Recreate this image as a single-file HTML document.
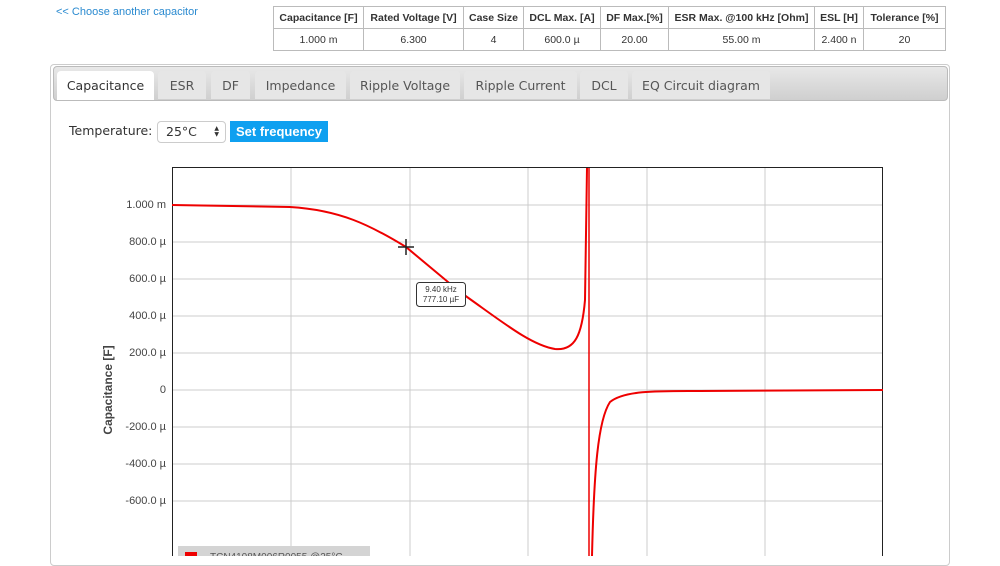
<!DOCTYPE html>
<html><head><style>
body{margin:0;width:1000px;height:556px;overflow:hidden;background:#fff;font-family:"Liberation Sans",sans-serif;position:relative}
.a{position:absolute}
table{border-collapse:collapse;position:absolute;left:273px;top:6px;font-size:10.5px;color:#333;table-layout:fixed;width:672px}
td{border:1px solid #bbb;text-align:center;height:21px;padding:0;white-space:nowrap;overflow:hidden}
tr:first-child td{font-weight:bold}
.tab{position:absolute;top:71px;height:28px;background:#e6e6e6;border-radius:4px 4px 0 0;font-size:12.5px;color:#555;text-align:center;line-height:29px;font-family:"DejaVu Sans",sans-serif}
.yl{position:absolute;right:834px;font-size:11px;color:#444}
</style></head><body>
<div class="a" style="left:56px;top:6px;font-size:11px;color:#2a8ad0">&lt;&lt; Choose another capacitor</div>
<table>
<colgroup><col style="width:90px"><col style="width:100px"><col style="width:60px"><col style="width:77px"><col style="width:68px"><col style="width:146px"><col style="width:49px"><col style="width:82px"></colgroup>
<tr><td>Capacitance [F]</td><td>Rated Voltage [V]</td><td>Case Size</td><td>DCL Max. [A]</td><td>DF Max.[%]</td><td>ESR Max. @100 kHz [Ohm]</td><td>ESL [H]</td><td>Tolerance [%]</td></tr>
<tr><td>1.000 m</td><td>6.300</td><td>4</td><td>600.0 µ</td><td>20.00</td><td>55.00 m</td><td>2.400 n</td><td>20</td></tr>
</table>
<div class="a" style="left:50px;top:64px;width:898px;height:500px;border:1px solid #ccc;border-radius:4px"></div>
<div class="a" style="left:53px;top:66px;width:893px;height:33px;background:linear-gradient(#e8e8e8,#cfcfcf);border:1px solid #bbb;border-radius:4px"></div>
<div class="tab" style="left:57px;width:97px;background:#fff;color:#333;height:29px">Capacitance</div>
<div class="tab" style="left:158px;width:48px">ESR</div>
<div class="tab" style="left:211px;width:39px">DF</div>
<div class="tab" style="left:255px;width:91px">Impedance</div>
<div class="tab" style="left:350px;width:110px">Ripple Voltage</div>
<div class="tab" style="left:464px;width:113px">Ripple Current</div>
<div class="tab" style="left:580px;width:48px">DCL</div>
<div class="tab" style="left:632px;width:138px">EQ Circuit diagram</div>
<div class="a" style="left:69px;top:123px;font-size:12.5px;color:#333;font-family:'DejaVu Sans',sans-serif">Temperature:</div>
<div class="a" style="left:157px;top:121px;width:67px;height:20px;border:1px solid #ccc;border-radius:4px;font-size:12.5px;line-height:20px;font-family:'DejaVu Sans',sans-serif;color:#333"><span style="margin-left:8px">25°C</span><span style="position:absolute;right:6px;font-size:6px;top:4px;line-height:6px">▲<br>▼</span></div>
<div class="a" style="left:230px;top:121px;width:98px;height:21px;background:#0fa0f0;color:#fff;font-size:13px;font-weight:bold;text-align:center;line-height:21px">Set frequency</div>
<svg class="a" style="left:0;top:0" width="1000" height="556">
<g stroke="#ccc" stroke-width="1">
<line x1="291" y1="167" x2="291" y2="556"/><line x1="410" y1="167" x2="410" y2="556"/><line x1="528" y1="167" x2="528" y2="556"/><line x1="647" y1="167" x2="647" y2="556"/><line x1="765" y1="167" x2="765" y2="556"/>
<line x1="172" y1="205" x2="883" y2="205"/><line x1="172" y1="242" x2="883" y2="242"/><line x1="172" y1="279" x2="883" y2="279"/><line x1="172" y1="316" x2="883" y2="316"/><line x1="172" y1="353" x2="883" y2="353"/><line x1="172" y1="390" x2="883" y2="390"/><line x1="172" y1="427" x2="883" y2="427"/><line x1="172" y1="464" x2="883" y2="464"/><line x1="172" y1="501" x2="883" y2="501"/>
</g>
<rect x="172.5" y="167.5" width="710" height="400" fill="none" stroke="#222"/>
<g fill="none" stroke="#e00" stroke-width="2">
<path d="M172 205 L290 207 C340 210 370 225 406 247 L460 292 C500 320 530 345 555 349 C575 351 582 335 585 300 L587 168"/>
<path d="M592 556 C594 470 598 420 610 402 C625 390 660 391 700 391 L883 390"/>
<line x1="589" y1="168" x2="589" y2="556" stroke-width="1.5"/>
</g>
<path d="M398 247h16M406 239v16" stroke="#222" stroke-width="1.5"/>
<rect x="416.5" y="282.5" width="49" height="24" rx="3" fill="#fff" stroke="#333"/>
<text x="441" y="292" font-size="8" text-anchor="middle" fill="#333" font-family="Liberation Sans">9.40 kHz</text>
<text x="441" y="302" font-size="8" text-anchor="middle" fill="#333" font-family="Liberation Sans">777.10 µF</text>
<text transform="translate(112,390) rotate(-90)" font-size="12" font-weight="bold" text-anchor="middle" fill="#444" font-family="Liberation Sans">Capacitance [F]</text>
<rect x="178" y="546" width="192" height="12" fill="#d4d4d4"/>
<rect x="185" y="552" width="12" height="6" fill="#e00"/>
<text x="210" y="560" font-size="10" fill="#555" font-family="Liberation Sans">TCN4108M006R0055 @25°C</text>
</svg>
<div class="yl" style="top:199px">1.000 m</div>
<div class="yl" style="top:236px">800.0 µ</div>
<div class="yl" style="top:273px">600.0 µ</div>
<div class="yl" style="top:310px">400.0 µ</div>
<div class="yl" style="top:347px">200.0 µ</div>
<div class="yl" style="top:384px">0</div>
<div class="yl" style="top:421px">-200.0 µ</div>
<div class="yl" style="top:458px">-400.0 µ</div>
<div class="yl" style="top:495px">-600.0 µ</div>
</body></html>
